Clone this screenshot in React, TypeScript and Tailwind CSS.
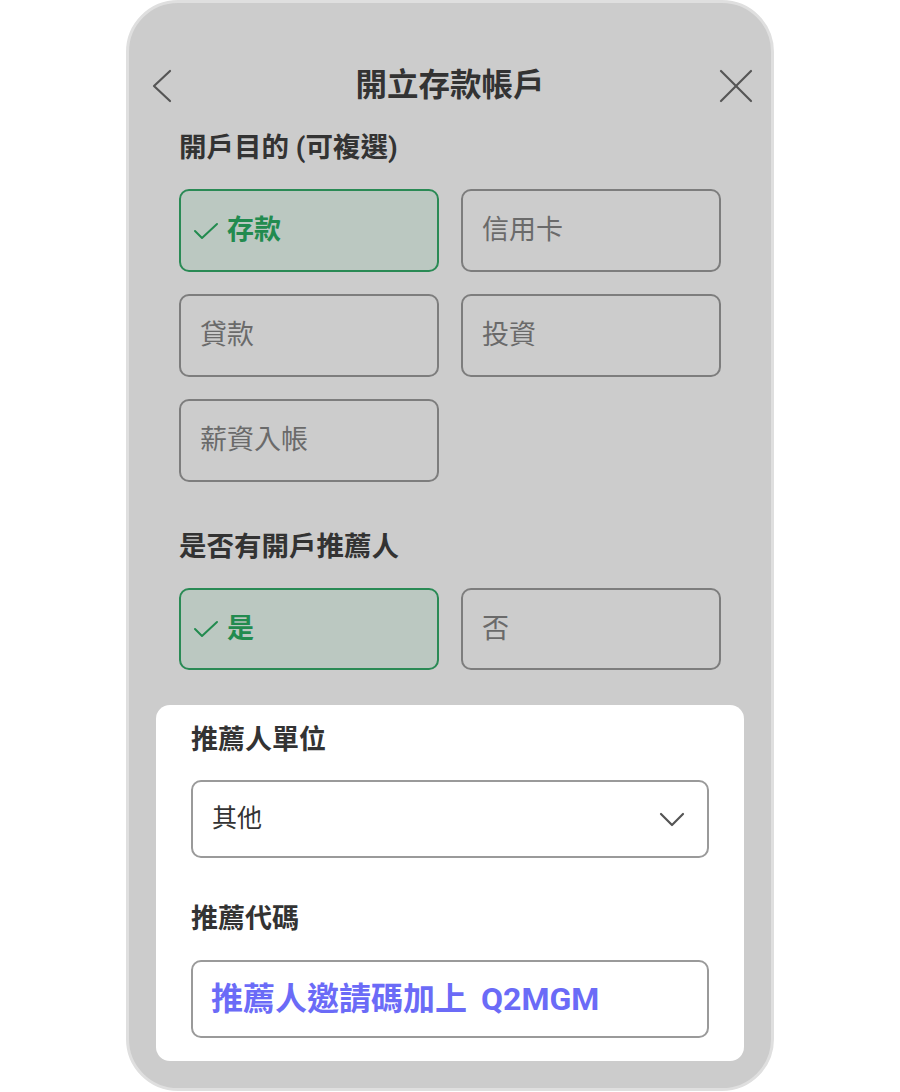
import React from 'react';

const FONT = { fontFamily: 'Roboto, "Noto Sans CJK TC", "Noto Sans", sans-serif' };

const Check = () => (
  <svg width="26" height="20" viewBox="0 0 26 20" fill="none" stroke="#228b4f" strokeWidth="2" strokeLinecap="round" strokeLinejoin="round">
    <polyline points="2,10 9,17 24,3" />
  </svg>
);

const Option: React.FC<{ label: string; selected?: boolean }> = ({ label, selected }) =>
  selected ? (
    <div className="h-[83px] rounded-[10px] border-2 border-[#2a8a55] bg-[#bbc8c1] flex items-center gap-[8px] pl-[12px]">
      <Check />
      <span className="text-[27px] font-bold text-[#228b4f]">{label}</span>
    </div>
  ) : (
    <div className="h-[83px] rounded-[10px] border-2 border-[#7d7d7d] flex items-center pl-[19px]">
      <span className="text-[27px] text-[#6a6a6a]">{label}</span>
    </div>
  );

export default function App() {
  return (
    <div className="min-h-[1092px] bg-white" style={FONT}>
      <div className="mx-auto w-[648px] rounded-[52px] border-[3px] border-[#dfdfdf] bg-[#cccccc] pb-[27px]">
        {/* Header */}
        <div className="mt-[63px] h-[40px] grid grid-cols-[1fr_auto_1fr] items-center px-[18px]">
          <svg className="ml-[5px]" width="20" height="34" viewBox="0 0 20 34" fill="none" stroke="#555" strokeWidth="2.2" strokeLinecap="round" strokeLinejoin="round">
            <polyline points="18,2 2,17 18,32" />
          </svg>
          <h1 className="text-[31.5px] font-bold text-[#333] leading-none">開立存款帳戶</h1>
          <div className="flex justify-end">
            <svg width="34" height="34" viewBox="0 0 34 34" fill="none" stroke="#555" strokeWidth="2.2" strokeLinecap="round">
              <line x1="2" y1="2" x2="32" y2="32" />
              <line x1="32" y1="2" x2="2" y2="32" />
            </svg>
          </div>
        </div>

        <div className="px-[50px]">
          <p className="mt-[24px] text-[27.5px] leading-[36px] font-bold text-[#333]">開戶目的 (可複選)</p>
          <div className="mt-[23px] grid grid-cols-2 gap-x-[22px] gap-y-[22px]">
            <Option label="存款" selected />
            <Option label="信用卡" />
            <Option label="貸款" />
            <Option label="投資" />
            <Option label="薪資入帳" />
          </div>

          <p className="mt-[47px] text-[27.5px] leading-[36px] font-bold text-[#333]">是否有開戶推薦人</p>
          <div className="mt-[23px] grid grid-cols-2 gap-x-[22px]">
            <div className="h-[82px] rounded-[10px] border-2 border-[#2a8a55] bg-[#bbc8c1] flex items-center gap-[8px] pl-[12px]">
              <Check />
              <span className="text-[27px] font-bold text-[#228b4f]">是</span>
            </div>
            <div className="h-[82px] rounded-[10px] border-2 border-[#7d7d7d] flex items-center pl-[19px]">
              <span className="text-[27px] text-[#6a6a6a]">否</span>
            </div>
          </div>
        </div>

        {/* Referrer card */}
        <div className="mx-[27px] mt-[35px] rounded-[14px] bg-white px-[35px] pt-[17px] pb-[23px]">
          <p className="text-[27px] leading-[36px] font-bold text-[#333]">推薦人單位</p>
          <div className="mt-[22px] h-[78px] rounded-[10px] border-2 border-[#9a9a9a] flex items-center justify-between pl-[19px] pr-[22px]">
            <span className="text-[25px] text-[#333]">其他</span>
            <svg width="26" height="15" viewBox="0 0 26 15" fill="none" stroke="#555" strokeWidth="2.2" strokeLinecap="round" strokeLinejoin="round">
              <polyline points="2,2 13,13 24,2" />
            </svg>
          </div>

          <p className="mt-[43px] text-[27px] leading-[36px] font-bold text-[#333]">推薦代碼</p>
          <div className="mt-[23px] h-[78px] rounded-[10px] border-2 border-[#9a9a9a] flex items-center pl-[18px]">
            <span className="text-[32px] font-bold text-[#6b6bf7]">
              推薦人邀請碼加上<span className="ml-[14px]">Q2MGM</span>
            </span>
          </div>
        </div>
      </div>
    </div>
  );
}
